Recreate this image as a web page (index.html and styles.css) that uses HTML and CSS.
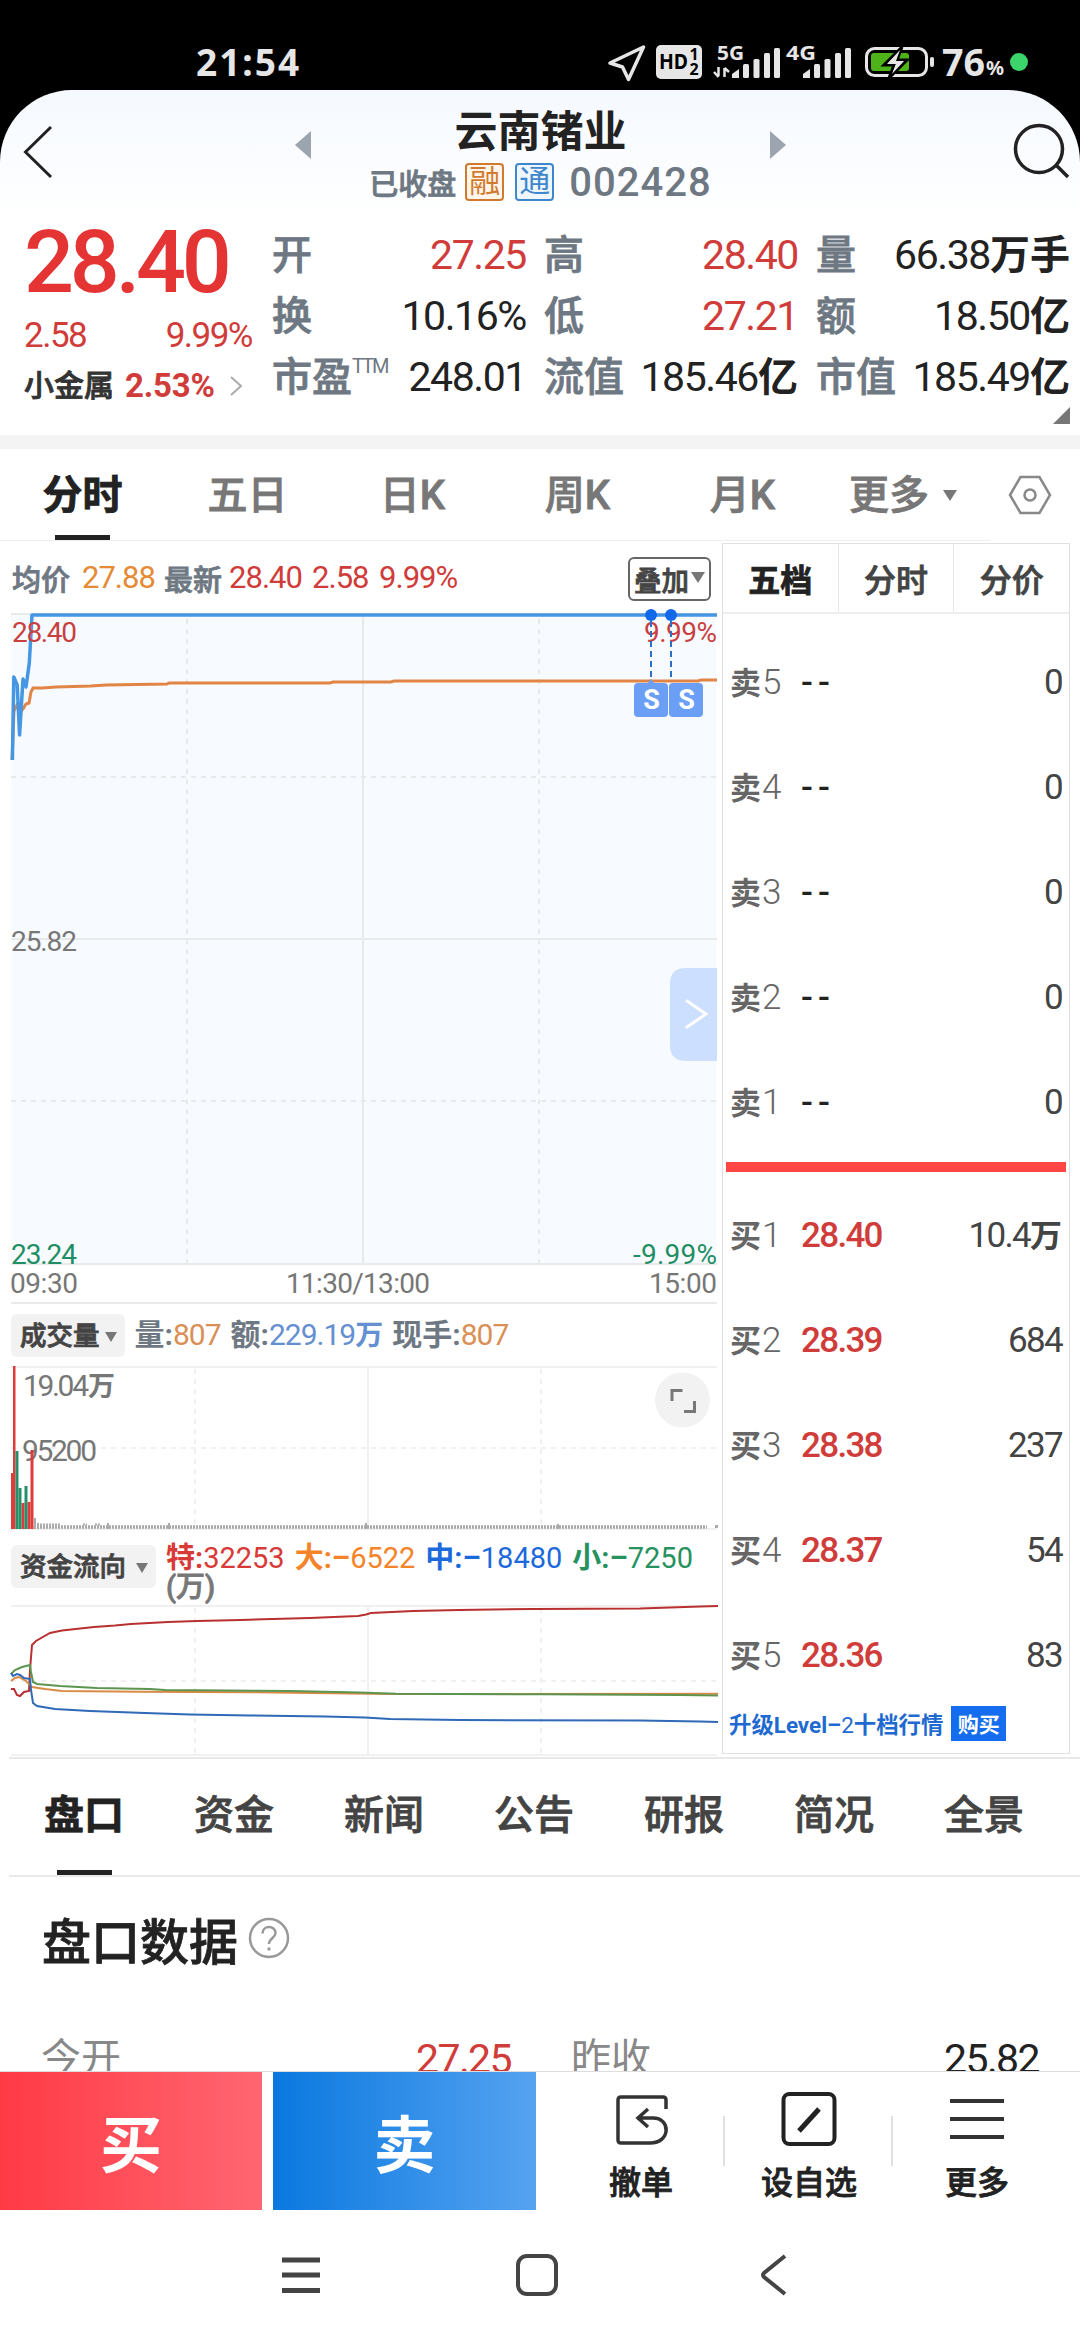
FILE: index.html
```html
<!DOCTYPE html>
<html lang="zh-Hans">
<head>
  <meta charset="UTF-8">
  <title>云南锗业 002428</title>
  <meta name="viewport" content="width=device-width, initial-scale=1">
  <link rel="stylesheet" href="styles.css">
</head>
<body>
<div class="phone">

  <!-- 状态栏 -->
  <div class="status-bar">
    <span class="clock">21:54</span>
    <svg class="status-icons" width="450" height="90" viewBox="590 0 450 90">
      <path d="M610 63L643.500 47L628.500 79.500L622.500 67Z" fill="none" stroke="#e6e6e6" stroke-width="3.500" stroke-linejoin="round"/>
      <rect x="656" y="45" width="46" height="34" rx="5" fill="#e6e6e6"/>
      <text class="st-hd" x="659" y="69" textLength="29" lengthAdjust="spacingAndGlyphs">HD</text>
      <text class="st-num" x="689.500" y="60">1</text>
      <text class="st-num" x="689.500" y="75">2</text>
      <text class="st-net" x="717" y="60" textLength="27" lengthAdjust="spacingAndGlyphs">5G</text>
      <text class="st-net" x="786" y="60" textLength="30" lengthAdjust="spacingAndGlyphs">4G</text>
      <path d="M718.500 67V76M714 72L718.500 77M724.500 77V68M724.500 68L729 72" fill="none" stroke="#e6e6e6" stroke-width="2.500"/>
      <g fill="#e6e6e6">
        <path d="M732 78v-4l7-5v9z"/><rect x="743" y="64" width="6" height="14" rx="1.500"/><rect x="753.500" y="59" width="6" height="19" rx="1.500"/><rect x="764" y="53" width="6" height="25" rx="1.500"/><rect x="774" y="48" width="6" height="30" rx="1.500"/>
        <path d="M803 78v-4l7-5v9z"/><rect x="814" y="64" width="6" height="14" rx="1.500"/><rect x="824.500" y="59" width="6" height="19" rx="1.500"/><rect x="835" y="53" width="6" height="25" rx="1.500"/><rect x="845" y="48" width="6" height="30" rx="1.500"/>
      </g>
      <rect x="866.500" y="48.500" width="60" height="27" rx="8" fill="none" stroke="#e6e6e6" stroke-width="3"/>
      <rect x="930" y="57" width="4" height="10" rx="2" fill="#e6e6e6"/>
      <rect x="871" y="53" width="38" height="18" rx="3" fill="#4db318"/>
      <path d="M902 47L884 65H894L889 78L907 60H897Z" fill="#e6e6e6" stroke="#000" stroke-width="3"/>
      <path d="M900 50L887 64H896L892 74L904 61H896Z" fill="#e6e6e6"/>
      <text class="st-bat" x="942" y="76" textLength="43" lengthAdjust="spacingAndGlyphs">76</text>
      <text class="st-pct" x="986" y="75">%</text>
      <circle cx="1019" cy="62" r="9" fill="#3bd56b"/>
    </svg>
  </div>

  <!-- 标题栏 -->
  <div class="app">
    <header class="header">
      <svg width="60" height="70" viewBox="0 117 60 70"><path d="M51 127L25.500 152L51 177" fill="none" stroke="#222" stroke-width="3"/></svg>
      <svg class="prev" width="18" height="28" viewBox="0 0 18 28"><path d="M17 0V28L1 14Z" fill="#9ba4af"/></svg>
      <div class="title">
        <h1>云南锗业</h1>
        <div class="sub">
          <span class="state">已收盘</span>
          <span class="tag tag-rong">融</span>
          <span class="tag tag-tong">通</span>
          <span class="code">002428</span>
        </div>
      </div>
      <svg class="next" width="18" height="28" viewBox="0 0 18 28"><path d="M1 0V28L17 14Z" fill="#9ba4af"/></svg>
      <svg class="search" width="70" height="70" viewBox="1010 117 70 70"><circle cx="1039" cy="149" r="23.500" fill="none" stroke="#222" stroke-width="3.500"/><path d="M1056 165L1068 177" stroke="#222" stroke-width="3.500"/></svg>
    </header>

    <!-- 行情 -->
    <section class="quote">
      <div class="price-box">
        <div class="price">28.40</div>
        <div class="change"><span>2.58</span><span>9.99%</span></div>
        <div class="sector">小金属 <b>2.53%</b>
          <svg width="14" height="20" viewBox="0 0 14 20"><path d="M2 1L12 10L2 19" fill="none" stroke="#aaa" stroke-width="2"/></svg>
        </div>
      </div>
      <dl class="stats">
        <div><dt>开</dt><dd class="red">27.25</dd></div>
        <div><dt>高</dt><dd class="red">28.40</dd></div>
        <div><dt>量</dt><dd>66.38<b>万手</b></dd></div>
        <div><dt>换</dt><dd>10.16%</dd></div>
        <div><dt>低</dt><dd class="red">27.21</dd></div>
        <div><dt>额</dt><dd>18.50<b>亿</b></dd></div>
        <div><dt>市盈<sup>TTM</sup></dt><dd>248.01</dd></div>
        <div><dt>流值</dt><dd>185.46<b>亿</b></dd></div>
        <div><dt>市值</dt><dd>185.49<b>亿</b></dd></div>
      </dl>
    </section>
    <svg class="expand" width="17" height="17" viewBox="0 0 17 17"><path d="M17 0V17H0Z" fill="#777"/></svg>
  </div>

  <!-- 周期切换 -->
  <nav class="period">
    <a class="on">分时</a>
    <a>五日</a>
    <a>日K</a>
    <a>周K</a>
    <a>月K</a>
    <a>更多<i class="caret"></i></a>
    <svg width="44" height="40" viewBox="0 0 44 40"><path d="M12.500 2H31.500L42 20L31.500 38H12.500L2 20Z" fill="none" stroke="#888" stroke-width="2.500"/><circle cx="22" cy="20" r="5.500" fill="none" stroke="#888" stroke-width="2.500"/></svg>
  </nav>

  <main class="main">
    <div class="charts">
      <div class="avg-row">
        <span class="lbl">均价</span><span class="orange v1">27.88</span>
        <span class="lbl">最新</span><span class="red v2">28.40</span><span class="red v3">2.58</span><span class="red v4">9.99%</span>
        <button class="overlay-btn">叠加<i class="caret"></i></button>
      </div>

      <svg class="chart" width="720" height="702" viewBox="0 601 720 702">
        <rect x="11" y="615" width="705.500" height="649" fill="#f7fbff"/>
        <g class="grid">
          <path d="M11 614H717M11 939H717M11 1264H717M363 615V1264"/>
          <path class="dash" d="M11 777H717M11 1101H717M187 619V1264M539 619V1264"/>
        </g>
        <polyline points="12,760 14,711 17,705 20,712 23,709 26,704 29,703 31,692 33,688 42,688 56,687 91,686 106,685 167,684 169,683 330,683 333,682 391,682 394,681 698,681 701,680 717,680" fill="none" stroke="#e18444" stroke-width="3"/>
        <polyline points="12.400,760 13.800,677 17.200,685 19.600,735 23,679 26,687 29.300,663 32,615 717,615" fill="none" stroke="#4597e3" stroke-width="3.500" stroke-linejoin="round"/>
        <text class="ax up" x="12" y="642" textLength="65">28.40</text>
        <text class="ax up" x="644" y="642" textLength="73">9.99%</text>
        <text class="ax" x="11" y="951" textLength="66">25.82</text>
        <text class="ax down" x="11" y="1264" textLength="66">23.24</text>
        <text class="ax down" x="633" y="1264" textLength="84">-9.99%</text>
        <text class="ax" x="10" y="1293" textLength="68">09:30</text>
        <text class="ax" x="286" y="1293" textLength="144">11:30/13:00</text>
        <text class="ax" x="649" y="1293" textLength="68">15:00</text>
        <path d="M651 621V681M671 621V681" stroke="#2c6fc9" stroke-width="2" stroke-dasharray="6 4"/>
        <circle cx="651" cy="615" r="6" fill="#1269ea"/>
        <circle cx="671" cy="615" r="6" fill="#1269ea"/>
        <path d="M647 684L651 679L655 684Z" fill="#6b9ff5"/>
        <rect x="634" y="683" width="34" height="34" rx="4" fill="#6b9ff5"/>
        <rect x="669" y="683" width="34" height="34" rx="4" fill="#6b9ff5"/>
        <text class="mark" x="651.500" y="709">S</text>
        <text class="mark" x="686.500" y="709">S</text>
        <path d="M717 968H686Q670 968 670 984V1045Q670 1061 686 1061H717Z" fill="#cddffe"/>
        <path d="M687 1001L706 1014L687 1027" fill="none" stroke="#fff" stroke-width="3" stroke-linecap="round"/>
      </svg>

      <div class="ind-head vol-head">
        <button class="pick">成交量<i class="caret"></i></button>
        <p><span>量:<em class="orange">807</em></span><span>额:<em class="blue">229.19<b>万</b></em></span><span>现手:<em class="orange">807</em></span></p>
      </div>

      <svg class="chart" width="720" height="170" viewBox="0 1362 720 170">
        <g class="grid light">
          <path d="M11 1367H717M11 1529H717M368 1367V1528"/>
          <path class="dash" d="M11 1448H717M195 1369V1528M541 1369V1528"/>
        </g>
        <text class="ax big" x="23" y="1396" textLength="66">19.04</text>
        <text class="ax big wan" x="88" y="1396">万</text>
        <text class="ax big" x="22" y="1461" textLength="75">95200</text>
        <g fill="#dc3c3a">
          <rect x="11" y="1473" width="3" height="56"/>
          <rect x="13" y="1366" width="2.500" height="163"/>
          <rect x="21.500" y="1503" width="3" height="26"/>
          <rect x="27.500" y="1502" width="3" height="27"/>
          <rect x="30.500" y="1450" width="3" height="79"/>
        </g>
        <g fill="#27906a">
          <rect x="15.500" y="1451" width="3" height="78"/>
          <rect x="18.500" y="1488" width="3" height="41"/>
          <rect x="24.500" y="1486" width="3" height="43"/>
        </g>
        <g fill="#aaa">
          <rect x="34" y="1518" width="2" height="11"/>
          <rect x="37" y="1523" width="2" height="6"/>
          <rect x="107" y="1523" width="2" height="6"/>
          <rect x="168" y="1523" width="2" height="6"/>
          <rect x="365" y="1523" width="2" height="6"/>
          <rect x="557" y="1524" width="2" height="5"/>
          <rect x="715" y="1525" width="3" height="3"/>
        </g>
        <path d="M40 1527H707" stroke="#a8a8a8" stroke-width="3.500" stroke-dasharray="2 1"/>
        <path d="M40 1524.500H60M83 1524.500H87M95 1524.500H101" stroke="#aaa" stroke-width="2" stroke-dasharray="2 1"/>
        <circle cx="682.500" cy="1400" r="27.500" fill="#f2f2f2"/>
        <path d="M672 1401V1390.500H682.500M684 1411.500H694.500V1401" fill="none" stroke="#777" stroke-width="3"/>
      </svg>

      <div class="ind-head fund-head">
        <button class="pick">资金流向<i class="caret"></i></button>
        <p><span class="f-red"><b>特:</b>32253</span><span class="f-orange"><b>大:–</b>6522</span><span class="f-blue"><b>中:–</b>18480</span><span class="f-green"><b>小:–</b>7250</span><br><small>(万)</small></p>
      </div>

      <svg class="chart" width="720" height="155" viewBox="0 1602 720 155">
        <g class="grid light">
          <path d="M11 1606H717M11 1755H717M368 1606V1755"/>
          <path class="dash" d="M11 1681H717M195 1608V1755M541 1608V1755"/>
        </g>
        <g fill="none" stroke-width="2">
          <polyline stroke="#b8302f" points="11,1689 14,1689 17,1695 20,1696 24,1692 29,1691 30,1670 32,1645 36,1641 50,1633 62,1630.500 94,1627 115,1625.500 131,1624 168,1622 197,1621 241,1620 310,1618 358,1616 366,1614.500 371,1613 413,1611 459,1610 533,1609 640,1608.500 700,1606.500 718,1606"/>
          <polyline stroke="#d98a45" points="11,1681 15,1678 19,1677 26,1681 32,1687 45,1689 62,1691 140,1691.700 250,1692.300 390,1694 718,1693.700"/>
          <polyline stroke="#5c9450" points="11,1674 15,1670 22,1667 30,1665 31,1672 33,1682 37,1684 60,1686 97,1688 150,1689 165,1690 290,1691 360,1692.500 396,1693.700 540,1694.300 680,1695 718,1695.500"/>
          <polyline stroke="#2f69b8" points="11,1673 13,1676 17,1674 20,1675 24,1678 30,1679 31,1690 33,1703 37,1706 55,1709 90,1711 145,1713 190,1714.500 250,1715.500 325,1716.500 365,1717.500 390,1719 460,1720 640,1720.500 700,1721.500 718,1722"/>
        </g>
      </svg>
    </div>

    <!-- 五档盘口 -->
    <aside class="book">
      <div class="book-tabs"><a class="on">五档</a><a>分时</a><a>分价</a></div>
      <ul class="sell">
        <li><span>卖<i>5</i></span><b>--</b><em>0</em></li>
        <li><span>卖<i>4</i></span><b>--</b><em>0</em></li>
        <li><span>卖<i>3</i></span><b>--</b><em>0</em></li>
        <li><span>卖<i>2</i></span><b>--</b><em>0</em></li>
        <li><span>卖<i>1</i></span><b>--</b><em>0</em></li>
      </ul>
      <div class="ratio"></div>
      <ul class="buy">
        <li><span>买<i>1</i></span><b>28.40</b><em>10.4<strong>万</strong></em></li>
        <li><span>买<i>2</i></span><b>28.39</b><em>684</em></li>
        <li><span>买<i>3</i></span><b>28.38</b><em>237</em></li>
        <li><span>买<i>4</i></span><b>28.37</b><em>54</em></li>
        <li><span>买<i>5</i></span><b>28.36</b><em>83</em></li>
      </ul>
      <div class="level2"><span>升级Level–<i>2</i>十档行情</span><button>购买</button></div>
    </aside>
  </main>

  <nav class="info-tabs">
    <a class="on">盘口</a><a>资金</a><a>新闻</a><a>公告</a><a>研报</a><a>简况</a><a>全景</a>
  </nav>

  <section class="data">
    <h2>盘口数据
      <svg width="42" height="42" viewBox="0 0 42 42"><circle cx="21" cy="21" r="19" fill="none" stroke="#999" stroke-width="2.500"/><path d="M14.500 16.500C14.500 8 27.500 8 27.500 16C27.500 21 21 21 21 27" fill="none" stroke="#999" stroke-width="2.500"/><circle cx="21" cy="32" r="1.700" fill="#999"/></svg>
    </h2>
    <div class="data-row">
      <span>今开</span><em class="red">27.25</em>
      <span>昨收</span><em>25.82</em>
    </div>
  </section>

  <!-- 底部操作 -->
  <footer class="actions">
    <button class="btn-buy">买</button>
    <button class="btn-sell">卖</button>
    <div class="tools">
      <a>
        <svg width="56" height="56" viewBox="613 2091 56 56"><path d="M666 2109V2100Q666 2097 663 2097H621Q618 2097 618 2100V2140Q618 2143 621 2143H650C671 2143 671 2118 653 2118H639M648 2109L638 2118L648 2127" fill="none" stroke="#333" stroke-width="3.500"/></svg>
        撤单
      </a>
      <a>
        <svg width="56" height="56" viewBox="779 2091 56 56"><rect x="781.500" y="2094" width="51" height="50" rx="6" fill="none" stroke="#222" stroke-width="4"/><path d="M797 2131L817 2109" stroke="#222" stroke-width="5"/></svg>
        设自选
      </a>
      <a>
        <svg width="56" height="56" viewBox="947 2091 56 56"><path d="M948 2101H1002M948 2119H1002M948 2137H1002" stroke="#333" stroke-width="4"/></svg>
        更多
      </a>
    </div>
  </footer>

  <div class="sys-nav">
    <svg width="40" height="44" viewBox="0 0 40 44"><path d="M1 7H39M1 22H39M1 37.500H39" stroke="#444" stroke-width="5"/></svg>
    <svg width="44" height="44" viewBox="0 0 44 44"><rect x="3" y="3" width="38" height="38" rx="9" fill="none" stroke="#444" stroke-width="4"/></svg>
    <svg width="30" height="44" viewBox="0 0 30 44"><path d="M27 3L6 20Q4 22 6 24L27 41" fill="none" stroke="#444" stroke-width="4"/></svg>
  </div>
</div>
</body>
</html>
```

FILE: styles.css
```css
* {
  box-sizing: border-box;
}
body {
  margin: 0;
  background: #000;
  color: #222;
  font-family: Roboto, "Noto Sans CJK SC", sans-serif;
}
h1, h2, p, ul, dl, dd {
  margin: 0;
  padding: 0;
}
ul {
  list-style: none;
}
em, i {
  font-style: normal;
}
svg {
  display: block;
  flex: none;
}
button {
  border: none;
  padding: 0;
  font-family: inherit;
}
.red {
  color: #d03c3a;
}
.orange {
  color: #e68a35;
}
.caret {
  display: inline-block;
  border: 7px solid transparent;
  border-top: 11px solid #777;
  border-bottom: 0;
}
/* medium weight for the Chinese labels */
.state, .sector, .stats dt, .period a, .lbl, .overlay-btn, .pick,
.book-tabs a, .info-tabs a, .data h2, .tools a, .fund-head small {
  -webkit-text-stroke: 0.8px;
}
.phone {
  width: 1080px;
  height: 2340px;
  overflow: hidden;
  display: flex;
  flex-direction: column;
  background: linear-gradient(#000 200px, #fff 200px);
}

/* status bar */
.status-bar {
  height: 90px;
  flex: none;
  display: flex;
  background: #000;
}
.clock {
  width: 394px;
  margin-left: 196px;
  color: #e6e6e6;
  font: bold 37px/124px "Noto Sans", sans-serif;
  letter-spacing: 2px;
}
.status-icons text {
  font-family: "Noto Sans", sans-serif;
  font-weight: bold;
  fill: #e6e6e6;
}
.status-icons .st-hd {
  font-size: 21px;
  fill: #000;
}
.status-icons .st-num {
  font-size: 16px;
  fill: #000;
}
.st-net {
  font-size: 20px;
}
.st-bat {
  font-size: 37px;
}
.st-pct {
  font-size: 20px;
}

/* header + quote */
.app {
  height: 345px;
  flex: none;
  background: linear-gradient(#f5f9ff, #fff 130px);
  border-radius: 72px 72px 0 0;
}
.header {
  height: 120px;
  display: flex;
  align-items: flex-start;
}
.header > svg:first-child {
  margin-top: 27px;
}
.header .prev {
  margin: 41px 0 0 234px;
}
.title {
  width: 457px;
  text-align: center;
}
.title h1 {
  margin-top: 13px;
  font-size: 43px;
  line-height: 58px;
  font-weight: bold;
}
.sub {
  display: flex;
  align-items: center;
  justify-content: center;
  height: 40px;
  margin-top: 1px;
  color: #6e7883;
}
.state {
  font-size: 29px;
  font-weight: 500;
  margin-right: 9px;
}
.tag {
  width: 39px;
  height: 38px;
  margin-right: 11px;
  border: 2px solid;
  border-radius: 4px;
  font-size: 31px;
  line-height: 34px;
}
.tag-rong {
  color: #d17a2f;
  background: #fff5ea;
}
.tag-tong {
  color: #3f87cc;
  background: #eef6ff;
  margin-right: 15px;
}
.code {
  font-size: 40px;
  font-weight: 500;
  letter-spacing: 1px;
}
.header .next {
  margin: 41px 0 0;
}
.header .search {
  margin: 27px 0 0 auto;
}
.quote {
  display: flex;
  height: 197px;
}
.price-box {
  width: 272px;
  padding: 0 20px 0 24px;
}
.price {
  margin-top: 7px;
  height: 90px;
  color: #e43534;
  font-size: 88px;
  line-height: 90px;
  font-weight: 500;
  letter-spacing: -4.2px;
}
.change {
  display: flex;
  justify-content: space-between;
  margin-top: 9px;
  color: #d03c3a;
  font-size: 35px;
  line-height: 40px;
  letter-spacing: -1.5px;
}
.sector {
  display: flex;
  align-items: center;
  margin-top: 10px;
  color: #333;
  font-size: 30px;
  line-height: 40px;
  font-weight: 500;
}
.sector b {
  margin: 0 14px 0 11px;
  color: #d03c3a;
  font-size: 33px;
  letter-spacing: -0.2px;
  -webkit-text-stroke: 0;
}
.stats {
  width: 798px;
  padding-top: 15px;
  display: grid;
  grid-template-columns: repeat(3, 254px);
  grid-auto-rows: 61px;
  column-gap: 18px;
}
.stats > div {
  display: flex;
  justify-content: space-between;
  line-height: 61px;
  white-space: nowrap;
}
.stats dt {
  color: #6e7883;
  font-size: 40px;
  font-weight: 500;
}
.stats sup {
  font-size: 20px;
  font-weight: 400;
  line-height: 1;
  position: relative;
  top: -4px;
  vertical-align: super;
  letter-spacing: -2px;
  -webkit-text-stroke: 0;
}
.stats dd {
  font-size: 41px;
  letter-spacing: -1.4px;
}
.stats dd b {
  font-size: 40px;
  letter-spacing: 0;
}
.expand {
  margin: 0 10px 0 auto;
}

/* period tabs */
.period {
  height: 106px;
  flex: none;
  display: flex;
  align-items: center;
  border-top: 14px solid #f4f4f4;
  background: #fff;
}
.period a {
  width: 165px;
  height: 92px;
  border-bottom: 1px solid #eee;
  color: #777;
  font-size: 40px;
  line-height: 93px;
  font-weight: 500;
  text-align: center;
  white-space: nowrap;
}
.period .on,
.info-tabs .on {
  color: #222;
  font-weight: bold;
  background: linear-gradient(#222, #222) center bottom / 55px 5px no-repeat;
}
.period .caret {
  margin-left: 14px;
  vertical-align: 8px;
}
.period a:nth-child(6) {
  padding-right: 9px;
}
.period svg {
  margin-left: 18px;
}

/* charts */
.main {
  height: 1216px;
  flex: none;
  display: flex;
  background: #fff;
}
.charts {
  width: 722px;
}
.avg-row {
  display: flex;
  align-items: center;
  height: 44px;
  margin-top: 16px;
  padding-left: 12px;
  font-size: 31px;
  letter-spacing: -1px;
}
.avg-row > span {
  margin-top: -3px;
}
.avg-row .lbl {
  color: #6e7883;
  font-size: 29px;
  font-weight: 500;
  letter-spacing: 0;
}
.avg-row .v1 {
  width: 82px;
  margin-left: 12px;
}
.avg-row .v2 {
  width: 83px;
  margin-left: 7px;
}
.avg-row .v3 {
  width: 67px;
}
.avg-row .v4 {
  width: 100px;
}
.overlay-btn {
  display: flex;
  align-items: center;
  width: 83px;
  height: 44px;
  margin-left: auto;
  margin-right: 11px;
  padding-left: 4px;
  border: 2px solid #666;
  border-radius: 6px;
  background: #fff;
  color: #444;
  font-size: 27.500px;
  font-weight: 500;
}
.overlay-btn .caret {
  margin: -4px 0 0 2px;
}
.grid path {
  fill: none;
  stroke: #e8eaea;
  stroke-width: 2;
}
.grid.light path {
  stroke: #f0f0f0;
}
.grid .dash {
  stroke-dasharray: 5 5;
}
.ax {
  font-size: 28px;
  fill: #777;
}
.big {
  font-size: 30px;
}
.wan {
  font-size: 27px;
  font-weight: bold;
}
.up {
  fill: #c9403f;
}
.down {
  fill: #1f8e63;
}
.mark {
  font-size: 27px;
  font-weight: bold;
  fill: #fff;
  text-anchor: middle;
}
.ind-head {
  display: flex;
  margin-left: 11px;
}
.vol-head {
  width: 706px;
  height: 60px;
  margin-top: -1px;
  padding-top: 10px;
  border-top: 2px solid #eaeaea;
}
.fund-head {
  height: 70px;
  padding-top: 13px;
}
.pick {
  display: flex;
  align-items: center;
  height: 43px;
  padding: 0 8px 0 9px;
  border-radius: 6px;
  background: #f2f2f2;
  color: #444;
  font-size: 26.500px;
  line-height: 40px;
  font-weight: 500;
}
.pick .caret {
  margin: 2px 0 0 5px;
  border-width: 10px 6px 0;
}
.fund-head .caret {
  margin-left: 10px;
}
.ind-head p {
  margin-left: 10px;
  white-space: nowrap;
}
.vol-head p {
  color: #6e7883;
  font-size: 30px;
  line-height: 41px;
  font-weight: bold;
}
.vol-head span {
  margin-right: 10px;
}
.vol-head em {
  font-size: 30px;
  font-weight: 400;
  letter-spacing: -1px;
}
.vol-head .orange {
  color: #d98f55;
}
.vol-head .blue {
  color: #648fd0;
}
.vol-head .blue b {
  font-size: 28px;
}
.fund-head p {
  margin-top: -1px;
  font-size: 29px;
  line-height: 29px;
}
.fund-head span {
  margin-right: 10px;
}
.fund-head small {
  color: #777;
  font-size: 29px;
  font-weight: 500;
}
.f-red {
  color: #d83a38;
}
.f-orange {
  color: #f5832a;
}
.f-blue {
  color: #1c69dc;
}
.f-green {
  color: #26925f;
}

/* order book */
.book {
  width: 348px;
  height: 1211px;
  margin-top: 2px;
  border: 1px solid #e0e0e0;
}
.book-tabs {
  display: flex;
  height: 70px;
  border-bottom: 2px solid #eee;
}
.book-tabs a {
  flex: 1;
  border-right: 1px solid #e8e8e8;
  color: #444;
  font-size: 32px;
  line-height: 75px;
  font-weight: 500;
  text-align: center;
}
.book-tabs a:last-child {
  border: none;
}
.book-tabs .on {
  color: #222;
  font-weight: bold;
}
.sell {
  padding-top: 16px;
}
.book li {
  display: flex;
  height: 105px;
  padding: 0 7px;
  font-size: 35px;
  line-height: 105px;
  letter-spacing: -1.7px;
}
.book li span {
  width: 71px;
  color: #666;
  font-size: 31px;
  font-weight: bold;
  letter-spacing: 0;
}
.book li i {
  margin-left: 1px;
  font-size: 35px;
  font-weight: 300;
}
.book li b {
  font-weight: 500;
  color: #d03c3a;
}
.book .sell b {
  color: #222;
  letter-spacing: 5px;
}
.book li em {
  margin-left: auto;
  color: #444;
}
.book li strong {
  font-size: 32px;
  letter-spacing: 0;
}
.ratio {
  height: 10px;
  margin: 7px 3px 11px;
  background: #ff4644;
}
.level2 {
  display: flex;
  align-items: center;
  height: 36px;
  margin-top: -3px;
  padding-left: 6px;
  color: #1f6ad0;
  font-size: 22.400px;
  font-weight: bold;
  white-space: nowrap;
}
.level2 i {
  font-weight: 400;
}
.level2 button {
  width: 55px;
  height: 35px;
  margin-left: 8px;
  background: #146cee;
  color: #fff;
  font-size: 21px;
  font-weight: bold;
}

/* info tabs */
.info-tabs {
  height: 120px;
  flex: none;
  display: flex;
  margin-left: 9px;
  border-top: 2px solid #e8e8e8;
  border-bottom: 2px solid #eaeaea;
  background: #fff;
}
.info-tabs a {
  width: 150px;
  color: #444;
  font-size: 40px;
  line-height: 113px;
  font-weight: 500;
  text-align: center;
}

.data {
  height: 195px;
  flex: none;
  overflow: hidden;
  border-bottom: 1px solid #ddd;
  background: #fff;
}
.data h2 {
  display: flex;
  align-items: center;
  height: 70px;
  margin: 26px 0 0 42px;
  font-size: 49px;
  font-weight: 500;
}
.data h2 svg {
  margin: -1px 0 0 10px;
}
.data-row {
  display: grid;
  grid-template-columns: 160px 310px 160px 1fr;
  margin-top: 56px;
  padding: 0 41px;
  font-size: 41px;
  line-height: 60px;
}
.data-row span {
  color: #888;
  font-size: 40px;
}
.data-row em {
  text-align: right;
  letter-spacing: -1.6px;
}
.data-row span:nth-of-type(2) {
  padding-left: 60px;
}

/* actions */
.actions {
  height: 138px;
  flex: none;
  display: flex;
  background: #fff;
}
.btn-buy, .btn-sell {
  width: 262px;
  color: #fff;
  font-size: 62px;
  font-weight: bold;
}
.btn-buy {
  background: linear-gradient(90deg, #ff3a45, #ff6671);
}
.btn-sell {
  width: 263px;
  margin-left: 11px;
  background: linear-gradient(90deg, #0a78df, #55a3f1);
}
.tools {
  display: flex;
  margin-left: 21px;
  padding-top: 19px;
}
.tools a {
  display: flex;
  flex-direction: column;
  align-items: center;
  width: 168px;
  font-size: 32px;
  line-height: 72px;
  font-weight: 500;
  background: linear-gradient(#e0e0e0, #e0e0e0) right 25px / 2px 50px no-repeat;
}
.tools a:last-child {
  background: none;
}
.sys-nav {
  height: 130px;
  flex: none;
  display: flex;
  padding: 43px 0 0 281px;
  background: #fff;
}
.sys-nav svg + svg {
  margin-left: 194px;
}
.sys-nav svg:last-child {
  margin-left: 199px;
}
```
